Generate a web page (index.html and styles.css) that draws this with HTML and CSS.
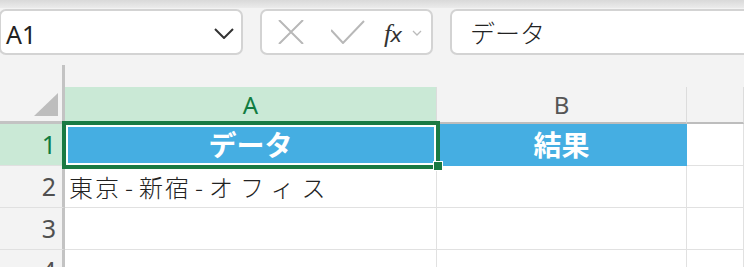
FILE: index.html
```html
<!DOCTYPE html>
<html lang="ja">
<head>
<meta charset="UTF-8">
<title>Sheet</title>
<link rel="stylesheet" href="styles.css">
</head>
<body>
<div class="topbar"></div>
<div class="toolbar">
  <div class="namebox">
    <span class="ref">A1</span>
    <svg class="chev" width="20" height="11" viewBox="0 0 20 11"><path d="M1 1 L10 10 L19 1" fill="none" stroke="#333" stroke-width="2"/></svg>
  </div>
  <div class="fbuttons">
    <svg width="26" height="24" viewBox="0 0 26 24"><path d="M1 0 L25 24 M25 0 L1 24" stroke="#b8b8b8" stroke-width="2" fill="none"/></svg>
    <svg width="34" height="24" viewBox="0 0 34 24"><path d="M0 10 L12 23 L33 1" stroke="#b8b8b8" stroke-width="2" fill="none"/></svg>
    <span class="fx"><i>f</i><em>x</em></span>
    <svg width="10" height="6" viewBox="0 0 10 6"><path d="M1 1 L5 5 L9 1" stroke="#bbb" stroke-width="1.3" fill="none"/></svg>
  </div>
  <div class="formula">データ</div>
</div>
<div class="sheet">
  <div class="grid">
    <div class="rh"></div>
    <div class="pad"></div>

    <div class="rh corner"><div class="tri"></div></div>
    <div class="ch sel">A</div>
    <div class="ch">B</div>
    <div class="ch"></div>

    <div class="rh sel">1</div>
    <div class="cell fill bold">データ</div>
    <div class="cell fill bold">結果</div>
    <div class="cell"></div>

    <div class="rh">2</div>
    <div class="cell left">東京<span class="h">-</span>新宿<span class="h">-</span><span class="kana">オフィス</span></div>
    <div class="cell"></div>
    <div class="cell"></div>

    <div class="rh">3</div>
    <div class="cell"></div>
    <div class="cell"></div>
    <div class="cell"></div>

    <div class="rh">4</div>
    <div class="cell"></div>
    <div class="cell"></div>
    <div class="cell"></div>
  </div>
  <div class="selection"><div class="handle"></div></div>
</div>
</body>
</html>
```

FILE: styles.css
```css
body {
  margin: 0;
  background: #f3f3f3;
  font-family: "Noto Sans", "Noto Sans CJK JP", sans-serif;
  color: #222;
  overflow: hidden;
}
.topbar {
  height: 8px;
  background: linear-gradient(#d9d9d9, #ebebeb);
}
.toolbar {
  display: flex;
  gap: 17px;
  height: 47px;
  padding-top: 1px;
}
.namebox, .fbuttons, .formula {
  box-sizing: border-box;
  height: 46px;
  background: #fff;
  border: 2px solid #d3d3d3;
  border-radius: 7px;
  display: flex;
  align-items: center;
}
.namebox {
  width: 244px;
  margin-left: -1px;
  padding: 0 6px 0 5px;
  justify-content: space-between;
}
.ref {
  font-size: 25px;
  padding-top: 3px;
}
.chev {
  margin-right: 1px;
  margin-top: 2px;
}
.fbuttons {
  width: 173px;
  padding-left: 16px;
  gap: 0;
}
.fbuttons svg:nth-child(2) {
  margin-left: 27px;
}
.fx {
  margin-left: 19px;
  font-size: 24px;
  color: #333;
}
.fx i {
  font-family: "Liberation Serif", serif;
  font-size: 26px;
}
.fx em {
  font-family: "DejaVu Sans", sans-serif;
  font-size: 20px;
  margin-left: -1px;
}
.fbuttons svg:last-child {
  margin-left: 10px;
  margin-top: 2px;
}
.formula {
  flex: 1;
  margin-right: -20px;
  padding-left: 18px;
  font-family: "Noto Sans CJK JP", sans-serif;
  font-weight: 300;
  font-size: 25px;
}
.sheet {
  position: relative;
  margin-top: 9px;
}
.grid {
  display: grid;
  grid-template-columns: 65px 372px 250px 1fr;
  grid-template-rows: 22px 37px 42px 42px 42px 42px;
}
.pad {
  grid-column: 2 / 5;
}
.rh {
  box-sizing: border-box;
  border-right: 3px solid #c3c3c3;
  border-bottom: 1px solid #e0e0e0;
  background: #f3f3f3;
  color: #505050;
  font-size: 25px;
  text-align: right;
  padding-right: 6px;
  line-height: 41px;
}
.rh:first-child {
  border-bottom: none;
}
.corner {
  border-bottom: 3px solid #c3c3c3;
  display: flex;
  justify-content: flex-end;
  align-items: flex-end;
  padding: 0 4px 5px 0;
}
.tri {
  width: 24px;
  height: 23px;
  background: #bdbdbd;
  clip-path: polygon(100% 0, 100% 100%, 0 100%);
}
.ch {
  box-sizing: border-box;
  background: #f3f3f3;
  border-right: 1px solid #dcdcdc;
  border-bottom: 2px solid #bdbdbd;
  text-align: center;
  font-size: 24px;
  color: #555;
  line-height: 35px;
}
.ch:last-child {
  border-right: none;
}
.sel {
  background: #cae9d6;
  color: #107c41;
}
.cell {
  box-sizing: border-box;
  background: #fff;
  border-right: 1px solid #e1e1e1;
  border-bottom: 1px solid #e1e1e1;
  font-family: "Noto Sans CJK JP", sans-serif;
  line-height: 41px;
  text-align: center;
}
.fill {
  background: #45aee2;
  color: #fff;
  border-color: #45aee2;
}
.bold {
  font-size: 28px;
  font-weight: bold;
}
.left {
  text-align: left;
  padding-left: 4px;
  font-size: 24px;
  font-weight: 300;
  letter-spacing: 2px;
  color: #222;
}
.h {
  margin: 0 4px;
}
.kana {
  letter-spacing: 7px;
}
.selection {
  position: absolute;
  left: 62px;
  top: 56px;
  width: 378px;
  height: 48px;
  box-sizing: border-box;
  border: 4px solid #1a7a44;
  box-shadow: inset 0 0 0 2px #fff;
}
.handle {
  position: absolute;
  left: 367px;
  top: 36px;
  width: 8px;
  height: 8px;
  background: #1a7a44;
  border: 1px solid #fff;
}
```
